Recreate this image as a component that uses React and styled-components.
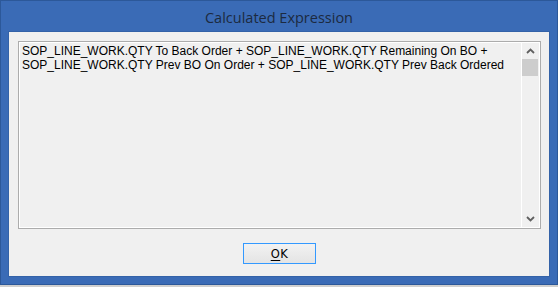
import styled, { createGlobalStyle } from "styled-components";

const Global = createGlobalStyle`
  html, body {
    margin: 0;
    background: #cfcfcf;
  }
  body {
    width: 558px;
    height: 287px;
    overflow: hidden;
  }
`;

const Window = styled.div`
  box-sizing: border-box;
  width: 558px;
  height: 285px;
  background: #3a6bb6;
  border: 1px solid #2c5899;
  display: flex;
  flex-direction: column;
  padding: 0 7px 7px;
`;

const TitleBar = styled.div`
  height: 30px;
  display: flex;
  align-items: center;
  justify-content: center;
  font-family: "Open Sans", "Noto Sans", sans-serif;
  font-size: 14.5px;
  color: #1c2a40;
  padding-top: 2px;
  box-sizing: border-box;
`;

const Client = styled.div`
  flex: 1;
  background: #f0f0f0;
  border: 1px solid #3362a8;
  display: flex;
  flex-direction: column;
  align-items: center;
  padding: 9px 8px 0 9px;
`;

const TextBox = styled.div`
  box-sizing: border-box;
  align-self: stretch;
  height: 188px;
  border: 1px solid #acacac;
  display: flex;
  background: #f0f0f0;
  box-shadow: inset -1px -1px 0 #ffffff, inset 1px 1px 0 #ffffff;
`;

const Content = styled.div`
  flex: 1;
  padding: 2px 3px;
  font-family: "Liberation Sans", Arial, sans-serif;
  font-size: 12px;
  line-height: 14px;
  color: #000;
`;

const ScrollBar = styled.div`
  width: 17px;
  border-left: 1px solid #ffffff;
  margin: 1px 1px 1px 0;
  display: flex;
  flex-direction: column;
  background: #f0f0f0;
`;

const Arrow = styled.div`
  height: 16px;
  display: flex;
  align-items: center;
  justify-content: center;
  margin-top: ${(p) => (p.$down ? "auto" : "0")};
`;

const Thumb = styled.div`
  height: 17px;
  background: #cdcdcd;
  margin: 0 1px 0 0;
`;

const Button = styled.button`
  margin-top: 14px;
  width: 73px;
  height: 21px;
  box-sizing: border-box;
  border: 1px solid #3399ff;
  border-radius: 0;
  outline: none;
  background: linear-gradient(#f2f2f2, #e4e4e4);
  font-family: "DejaVu Sans", sans-serif;
  font-size: 11.5px;
  color: #000;
  padding: 0;
  letter-spacing: 0.5px;
  u {
    text-decoration: underline;
    text-underline-offset: 2px;
  }
`;

const Chevron = ({ down }) => (
  <svg width="9" height="6" viewBox="0 0 9 6">
    <path
      d={down ? "M1 1 L4.5 4.5 L8 1" : "M1 5 L4.5 1.5 L8 5"}
      fill="none"
      stroke="#606060"
      strokeWidth="1.8"
    />
  </svg>
);

export default function App() {
  return (
    <>
      <Global />
      <Window>
        <TitleBar>Calculated Expression</TitleBar>
        <Client>
          <TextBox>
            <Content>
              SOP_LINE_WORK.QTY To Back Order + SOP_LINE_WORK.QTY Remaining On BO +
              <br />
              SOP_LINE_WORK.QTY Prev BO On Order + SOP_LINE_WORK.QTY Prev Back Ordered
            </Content>
            <ScrollBar>
              <Arrow>
                <Chevron />
              </Arrow>
              <Thumb />
              <Arrow $down>
                <Chevron down />
              </Arrow>
            </ScrollBar>
          </TextBox>
          <Button>
            <u>O</u>K
          </Button>
        </Client>
      </Window>
    </>
  );
}
